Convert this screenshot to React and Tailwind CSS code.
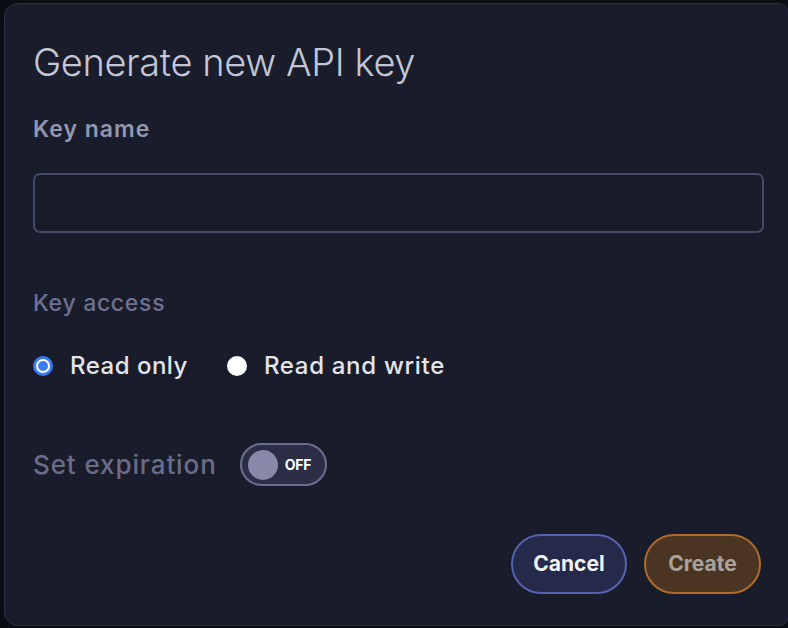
import React from "react";

export default function App() {
  return (
    <div
      className="w-[788px] h-[628px] bg-[#0b0d14] pt-[3px] pl-[4px] pb-[2px] flex"
      style={{ fontFamily: "Inter, 'Noto Sans', sans-serif" }}
    >
      <div className="flex-1 flex flex-col rounded-tl-[14px] rounded-tr-[10px] rounded-bl-[14px] rounded-br-[10px] border border-[#2a2f45] bg-[#191c2b] pl-[28px] pr-[24px]">
        <h1 className="mt-[34px] text-[38px] leading-[48px] font-light text-[#c3c6d4] tracking-[-0.4px]">
          Generate new API key
        </h1>
        <div className="mt-[29px] text-[23px] leading-[28px] font-semibold text-[#9496b0] tracking-[1px]">
          Key name
        </div>
        <input
          className="mt-[30px] h-[60px] w-[731px] rounded-[7px] border-2 border-[#444a68] bg-[#181b28] outline-none px-3 text-[#e5e7eb]"
          type="text"
        />
        <div className="mt-[56px] text-[23px] leading-[28px] font-medium text-[#6e7190] tracking-[0.7px]">
          Key access
        </div>
        <div className="mt-[34px] flex items-center h-[30px]">
          <label className="flex items-center">
            <span className="w-[20px] h-[20px] rounded-full bg-[#3a7bf6] flex items-center justify-center">
              <span className="w-[14px] h-[14px] rounded-full bg-white flex items-center justify-center">
                <span className="w-[10px] h-[10px] rounded-full bg-[#3a7bf6]"></span>
              </span>
            </span>
            <span className="ml-[17px] text-[24px] font-medium text-[#e4e5ea] tracking-[0.5px]">Read only</span>
          </label>
          <label className="flex items-center ml-[39px]">
            <span className="w-[20px] h-[20px] rounded-full bg-white"></span>
            <span className="ml-[17px] text-[24px] font-medium text-[#e4e5ea] tracking-[0.7px]">Read and write</span>
          </label>
        </div>
        <div className="mt-[62px] flex items-center">
          <span className="text-[26px] leading-[30px] font-medium text-[#6a6d8a] tracking-[0.9px]">Set expiration</span>
          <span className="ml-[23px] w-[87px] h-[43px] rounded-full border-2 border-[#6b6f8f] bg-[#2b2e44] flex items-center pl-[6px]">
            <span className="w-[30px] h-[30px] rounded-full bg-[#8a88a9]"></span>
            <span className="ml-[7px] text-[14px] font-bold text-white tracking-[-0.3px]">OFF</span>
          </span>
        </div>
        <div className="mt-[48px] flex justify-end gap-[17px] pr-[3px]">
          <button className="w-[116px] h-[60px] rounded-full border-2 border-[#5562b0] bg-[#252a4a] text-[21px] font-bold text-[#f3f3f6]">
            Cancel
          </button>
          <button className="w-[117px] h-[60px] rounded-full border-2 border-[#b06a2a] bg-[#4a3522] text-[21px] font-bold text-[#aaa39d]">
            Create
          </button>
        </div>
      </div>
    </div>
  );
}
